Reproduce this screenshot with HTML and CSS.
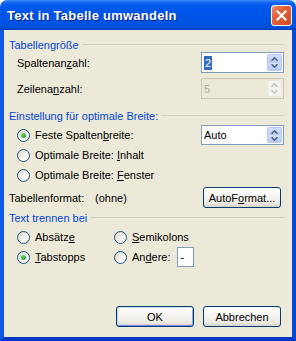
FILE: index.html
```html
<!DOCTYPE html>
<html>
<head>
<meta charset="utf-8">
<link rel="stylesheet" href="styles.css">
</head>
<body>
<div class="window">
  <div class="titlebar">
    <span class="title">Text in Tabelle umwandeln</span>
    <div class="close">
      <svg width="11" height="11" viewBox="0 0 11 11"><path d="M1.5 1.5 L9.5 9.5 M9.5 1.5 L1.5 9.5" stroke="#fff" stroke-width="2.2" stroke-linecap="square"/></svg>
    </div>
  </div>
  <div class="client">
    <div class="group-head"><span>Tabellengröße</span><i class="rule"></i></div>
    <div class="row field-row first">
      <span class="lbl">Spaltenan<u>z</u>ahl:</span>
      <div class="field">
        <span class="val"><span class="sel">2</span></span>
        <div class="spinbtn">
          <div class="half"><svg width="7" height="4" viewBox="0 0 7 4"><path d="M0.5 3.8 L3.5 0.8 L6.5 3.8" fill="none" stroke="#4D6185" stroke-width="1.6"/></svg></div>
          <div class="half"><svg width="7" height="4" viewBox="0 0 7 4"><path d="M0.5 0.2 L3.5 3.2 L6.5 0.2" fill="none" stroke="#4D6185" stroke-width="1.6"/></svg></div>
        </div>
      </div>
    </div>
    <div class="row field-row second">
      <span class="lbl">Zeilena<u>n</u>zahl:</span>
      <div class="field disabled">
        <span class="val">5</span>
        <div class="spinbtn">
          <div class="half"><svg width="7" height="4" viewBox="0 0 7 4"><path d="M0.5 3.8 L3.5 0.8 L6.5 3.8" fill="none" stroke="#CAC8BB" stroke-width="1.6"/></svg></div>
          <div class="half"><svg width="7" height="4" viewBox="0 0 7 4"><path d="M0.5 0.2 L3.5 3.2 L6.5 0.2" fill="none" stroke="#CAC8BB" stroke-width="1.6"/></svg></div>
        </div>
      </div>
    </div>

    <div class="group-head g2"><span>Einstellung für optimale Breite:</span><i class="rule"></i></div>
    <div class="row radio-row first-radio">
      <span class="radio checked"></span><span class="lbl">Feste Spalten<u>b</u>reite:</span>
      <div class="field combo">
        <span class="val">Auto</span>
        <div class="spinbtn">
          <div class="half"><svg width="7" height="4" viewBox="0 0 7 4"><path d="M0.5 3.8 L3.5 0.8 L6.5 3.8" fill="none" stroke="#4D6185" stroke-width="1.6"/></svg></div>
          <div class="half"><svg width="7" height="4" viewBox="0 0 7 4"><path d="M0.5 0.2 L3.5 3.2 L6.5 0.2" fill="none" stroke="#4D6185" stroke-width="1.6"/></svg></div>
        </div>
      </div>
    </div>
    <div class="row radio-row">
      <span class="radio"></span><span class="lbl">Optimale Breite: <u>I</u>nhalt</span>
    </div>
    <div class="row radio-row">
      <span class="radio"></span><span class="lbl">Optimale Breite: <u>F</u>enster</span>
    </div>
    <div class="row format-row">
      <span class="fmt-lbl">Tabellenformat:</span><span class="lbl">(ohne)</span>
      <button class="btn">AutoF<u>o</u>rmat...</button>
    </div>

    <div class="group-head g3"><span>Text trennen bei</span><i class="rule"></i></div>
    <div class="sep-grid">
      <div class="row radio-row"><span class="radio"></span><span>Absätz<u>e</u></span></div>
      <div class="row radio-row col2"><span class="radio"></span><span><u>S</u>emikolons</span></div>
      <div class="row radio-row"><span class="radio checked"></span><span><u>T</u>abstopps</span></div>
      <div class="row radio-row col2"><span class="radio"></span><span>An<u>d</u>ere:</span><div class="field small"><span class="val">-</span></div></div>
    </div>

    <div class="footer">
      <button class="btn default">OK</button>
      <button class="btn">Abbrechen</button>
    </div>
  </div>
</div>
</body>
</html>
```

FILE: styles.css
```css
* { box-sizing: border-box; }
html, body { margin: 0; padding: 0; background: #ffffff; }
body {
  width: 296px; height: 341px; overflow: hidden;
  font-family: "Liberation Sans", Arial, sans-serif;
  font-size: 11px; color: #000;
}
u { text-decoration: underline; text-underline-offset: 1px; }

.window { width: 296px; height: 341px; display: flex; flex-direction: column; }

.titlebar {
  height: 30px; flex: none;
  border-radius: 7px 7px 0 0;
  background: linear-gradient(to bottom,
    #3A8CF8 0px, #1C6FF2 2px, #0A5DEC 4px, #0058EE 8px,
    #0055E8 16px, #0054E3 22px, #0050DA 27px, #0040C0 30px);
  display: flex; align-items: center; justify-content: space-between;
  padding: 0 4px 0 7px;
}
.title {
  font-weight: bold; font-size: 13px; color: #fff;
  letter-spacing: 0.25px;
  text-shadow: 1px 1px 0 #0A1E8A;
  padding-top: 1px;
}
.close {
  width: 21px; height: 21px;
  border: 1px solid #fff; border-radius: 3px;
  background: linear-gradient(135deg, #EF8D6C 0%, #E25F37 40%, #CF4A22 100%);
  display: flex; align-items: center; justify-content: center;
  margin-top: 1px;
}

.client {
  flex: 1;
  background: #ECE9D8;
  border-left: 4px solid #1058E8;
  border-right: 4px solid #0A47D8;
  border-bottom: 4px solid #0535C8;
  padding: 8px 8px 0 5px;
  display: flex; flex-direction: column;
}

.group-head {
  display: flex; align-items: center; height: 13px;
  color: #0046D5;
}
.group-head .rule { flex: 1; height: 1px; background: #D0D0BF; margin-left: 3px; }
.g2 { margin-top: 10px; }
.g3 { margin-top: 3px; }

.row { display: flex; align-items: center; }
.field-row { height: 21px; padding-left: 8px; }
.field-row.first { margin-top: 1px; }
.field-row.second { margin-top: 5px; }
.lbl { flex: 1; }

.field {
  width: 83px; height: 21px;
  border: 1px solid #7F9DB9; background: #fff;
  display: flex; align-items: center;
}
.field .val { flex: 1; padding-left: 2px; }
.sel { background: #316AC5; color: #fff; padding: 1px 1px; }
.field.disabled { background: #ECE9D8; border-color: #C9C7BA; color: #ACA899; }
.field.combo { height: 20px; }

.spinbtn {
  width: 15px; height: 17px; margin-right: 1px;
  display: flex; flex-direction: column;
}
.combo .spinbtn { height: 16px; }
.half {
  flex: 1;
  background: linear-gradient(to bottom, #D3DEFB, #B9CBF5);
  border: 1px solid #B6C7F1;
  display: flex; align-items: center; justify-content: center;
}
.half:first-child { border-radius: 2px 2px 0 0; border-bottom: 0; }
.half:last-child { border-radius: 0 0 2px 2px; border-top: 0; }
.disabled .half { background: #F3F2EC; border-color: #EAE8DD; }

.radio-row { height: 20px; padding-left: 8px; }
.first-radio { margin-top: 3px; }
.radio {
  width: 13px; height: 13px; flex: none;
  border: 1px solid #1C5180; border-radius: 50%;
  background: linear-gradient(135deg, #DCD9C5 0%, #F4F3EE 55%, #ffffff 100%);
  margin-right: 5px;
  display: flex; align-items: center; justify-content: center;
}
.radio.checked::after {
  content: ""; width: 5px; height: 5px; border-radius: 50%;
  background: radial-gradient(circle at 40% 35%, #62D562 0%, #3CB43C 50%, #1E9A1E 100%);
}

.format-row { height: 21px; margin-top: 2px; }
.fmt-lbl { width: 86px; }

.btn {
  font-family: "Liberation Sans", Arial, sans-serif; font-size: 11px; color: #000;
  width: 78px; height: 21px; padding: 0;
  border: 1px solid #003C74; border-radius: 3px;
  background: linear-gradient(to bottom, #FFFFFF 0%, #F6F5F1 40%, #ECEBE5 80%, #D8D3C8 100%);
  margin-right: 3px;
}
.btn.default {
  box-shadow: inset 0 1px 0 #CEE7FF, inset 1px 0 0 #BCD4F6, inset -1px 0 0 #89ADE4, inset 0 -1px 0 #6982EE;
}

.sep-grid {
  display: grid; grid-template-columns: 105px 1fr;
  margin-top: 3px;
}
.col2 { padding-left: 0; }
.field.small { width: 17px; height: 20px; margin-left: 6px; }
.field.small .val { padding-left: 3px; }

.footer {
  margin-top: auto; padding-bottom: 10px;
  display: flex; justify-content: flex-end; gap: 6px;
}
```
